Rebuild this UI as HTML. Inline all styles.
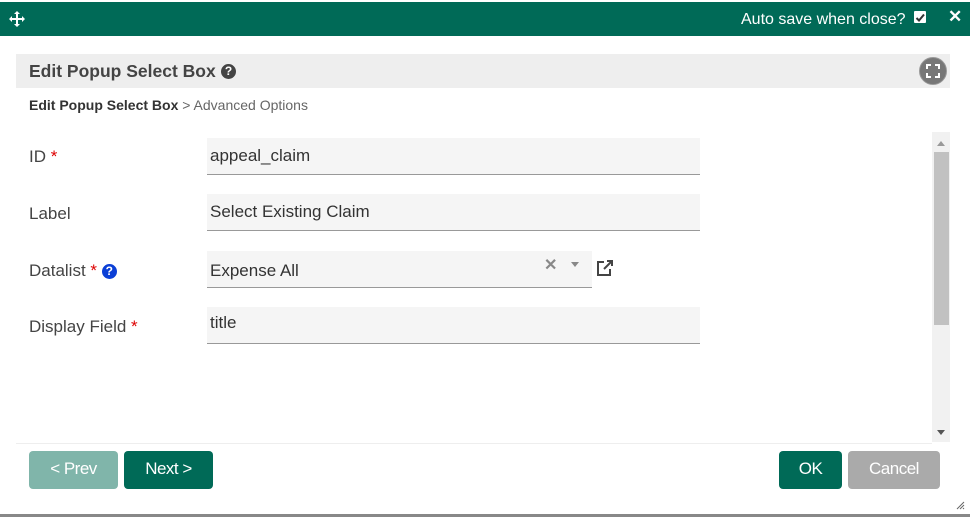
<!DOCTYPE html>
<html><head><style>
*{box-sizing:border-box;margin:0;padding:0}
body{width:970px;height:517px;background:#fff;font-family:"Liberation Sans",sans-serif;position:relative;overflow:hidden}
.a{position:absolute}
.hdr{left:0;top:2px;width:970px;height:34px;background:#006a57;color:#fff}
.lbl{left:29px;font-size:17px;color:#444}
.inp{left:207px;width:493px;height:37px;background:#f5f5f5;border-bottom:1px solid #999;font-size:17px;color:#333;padding:8px 0 0 3px}
.req{color:#d00}
.btn{top:451px;height:38px;border-radius:4px;color:#fff;font-size:17px;text-align:center;line-height:36px;letter-spacing:-0.5px}
</style></head><body>
<div class="a hdr">
 <svg class="a" style="left:9px;top:9px" width="16" height="16" viewBox="0 0 16 16" fill="#fff"><path d="M8 0L11 3H9V7H13V5L16 8L13 11V9H9V13H11L8 16L5 13H7V9H3V11L0 8L3 5V7H7V3H5Z"/></svg>
 <div class="a" style="left:741px;top:9px;font-size:16px">Auto save when close?</div>
 <div class="a" style="left:914px;top:9px;width:12px;height:12px;background:#fff;border-radius:1px"><svg width="12" height="12" viewBox="0 0 12 12"><path d="M2.5 6L5 8.5L10 2.5" stroke="#333" stroke-width="2" fill="none"/></svg></div>
 <div class="a" style="left:948px;top:5px;font-size:17px;font-weight:bold">✕</div>
</div>
<div class="a" style="left:16px;top:54px;width:934px;height:34px;background:#eee"></div>
<div class="a" style="left:29px;top:61px;font-size:17.5px;font-weight:bold;color:#444">Edit Popup Select Box</div>
<div class="a" style="left:221px;top:64px;width:15px;height:15px;border-radius:50%;background:#444;color:#fff;font-size:12px;font-weight:bold;text-align:center;line-height:15px">?</div>
<div class="a" style="left:919px;top:57px;width:28px;height:28px;border-radius:50%;background:#777;border:1px solid #999"><svg width="26" height="26" viewBox="0 0 26 26" fill="none" stroke="#fff" stroke-width="2"><path d="M7 11V7H11M15 7H19V11M19 15V19H15M11 19H7V15"/></svg></div>
<div class="a" style="left:29px;top:97px;font-size:14px;color:#666"><b style="color:#333">Edit Popup Select Box</b> &gt; Advanced Options</div>

<div class="a lbl" style="top:147px">ID <span class="req">*</span></div>
<div class="a inp" style="top:138px">appeal_claim</div>
<div class="a lbl" style="top:204px">Label</div>
<div class="a inp" style="top:194px">Select Existing Claim</div>
<div class="a lbl" style="top:261px">Datalist <span class="req">*</span> <span style="display:inline-block;width:15px;height:15px;border-radius:50%;background:#0b3fd6;color:#fff;font-size:12px;font-weight:bold;text-align:center;line-height:15px;vertical-align:1px">?</span></div>
<div class="a inp" style="top:251px;width:385px;padding-top:10px">Expense All</div>
<div class="a" style="left:544px;top:255px;font-size:16px;font-weight:bold;color:#888">✕</div>
<div class="a" style="left:571px;top:262px;width:0;height:0;border-left:4px solid transparent;border-right:4px solid transparent;border-top:5px solid #888"></div>
<svg class="a" style="left:596px;top:259px" width="18" height="18" viewBox="0 0 18 18" fill="none" stroke="#444" stroke-width="2"><path d="M8 3H2V16H14V10"/><path d="M8 10L16 2M11 2H16V7"/></svg>
<div class="a lbl" style="top:317px">Display Field <span class="req">*</span></div>
<div class="a inp" style="top:307px;padding-top:6px">title</div>

<div class="a" style="left:932px;top:132px;width:18px;height:310px;background:#f1f1f1"></div>
<div class="a" style="left:934px;top:152px;width:15px;height:173px;background:#c1c1c1"></div>
<div class="a" style="left:937px;top:141px;border-left:4px solid transparent;border-right:4px solid transparent;border-bottom:5px solid #999"></div>
<div class="a" style="left:937px;top:430px;border-left:4px solid transparent;border-right:4px solid transparent;border-top:5px solid #555"></div>
<div class="a" style="left:16px;top:443px;width:916px;height:1px;background:#eee"></div>

<div class="a btn" style="left:29px;width:89px;background:#80b5aa">&lt; Prev</div>
<div class="a btn" style="left:124px;width:89px;background:#006a57">Next &gt;</div>
<div class="a btn" style="left:779px;width:63px;background:#006a57">OK</div>
<div class="a btn" style="left:848px;width:92px;background:#aaa">Cancel</div>
<svg class="a" style="left:955px;top:500px" width="10" height="10" viewBox="0 0 10 10" stroke="#666"><path d="M9 2L2 9M9 5L5 9M9 8L8 9"/></svg>
<div class="a" style="left:0;top:514px;width:970px;height:3px;background:#888"></div>
</body></html>
